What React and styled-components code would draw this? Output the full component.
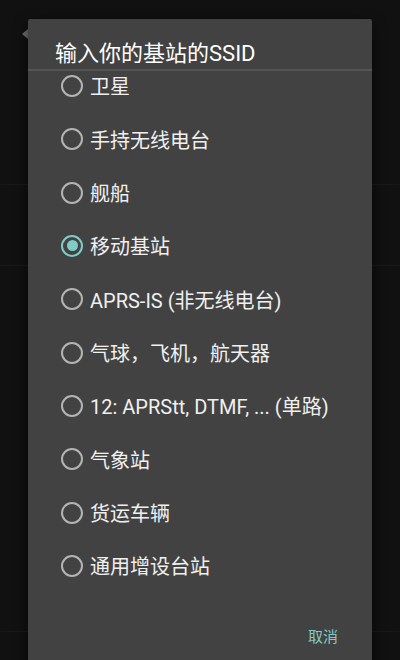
import React, { useState } from "react";
import styled, { createGlobalStyle } from "styled-components";

const GlobalStyle = createGlobalStyle`
    html, body {
        margin: 0;
        padding: 0;
        background: #111111;
    }
    * {
        box-sizing: border-box;
    }
`;

const Screen = styled.div`
    position: relative;
    width: 400px;
    height: 660px;
    overflow: hidden;
    background: #111111;
    font-family: Roboto, "Noto Sans CJK SC", sans-serif;
    padding: 19px 0 0 28px;
`;

const BackChevron = styled.div`
    position: absolute;
    left: 22px;
    top: 29px;
    width: 0;
    height: 0;
    border-top: 5px solid transparent;
    border-bottom: 5px solid transparent;
    border-right: 6px solid #6f6f6f;
`;

const BgLine = styled.div`
    position: absolute;
    left: 0;
    right: 0;
    top: ${({ y }) => y}px;
    height: 1px;
    background: #181818;
`;

const Dialog = styled.div`
    position: relative;
    width: 344px;
    min-height: 660px;
    background: #424242;
    border-radius: 2px;
    box-shadow: 0 4px 14px rgba(0, 0, 0, 0.6);
    display: flex;
    flex-direction: column;
`;

const Title = styled.div`
    height: 50px;
    padding: 21px 27px 0;
    font-size: 22px;
    line-height: 28px;
    color: #ffffff;
    white-space: nowrap;
`;

const Divider = styled.div`
    height: 2px;
    background: #545454;
`;

const ListViewport = styled.div`
    overflow: hidden;
`;

const List = styled.div`
    margin-top: -11.7px;
    display: flex;
    flex-direction: column;
`;

const Item = styled.label`
    height: 53.33px;
    display: flex;
    align-items: center;
    gap: 7px;
    padding-left: 33px;
    cursor: pointer;
`;

const Radio = styled.span`
    width: 22px;
    height: 22px;
    border-radius: 50%;
    border: 2px solid ${({ checked }) => (checked ? "#80cbc4" : "#b4b4b4")};
    display: flex;
    align-items: center;
    justify-content: center;
    flex-shrink: 0;

    &::after {
        content: "";
        width: 11px;
        height: 11px;
        border-radius: 50%;
        background: #80cbc4;
        display: ${({ checked }) => (checked ? "block" : "none")};
    }
`;

const ItemText = styled.span`
    font-size: 20px;
    color: #f0f0f0;
    white-space: nowrap;
`;

const Footer = styled.div`
    display: flex;
    justify-content: flex-end;
    padding: 32px 26px 0 0;
`;

const TextButton = styled.button`
    background: none;
    border: none;
    padding: 0 8px;
    font-family: inherit;
    font-size: 15px;
    line-height: 24px;
    color: #80cbc4;
`;

const options = [
    "卫星",
    "手持无线电台",
    "舰船",
    "移动基站",
    "APRS-IS (非无线电台)",
    "气球，飞机，航天器",
    "12: APRStt, DTMF, ... (单路)",
    "气象站",
    "货运车辆",
    "通用增设台站",
];

export default function App() {
    const [selected, setSelected] = useState(3);

    return (
        <Screen>
            <GlobalStyle />
            <BgLine y={184} />
            <BgLine y={265} />
            <BgLine y={631} />
            <BackChevron />
            <Dialog>
                <Title>输入你的基站的SSID</Title>
                <Divider />
                <ListViewport>
                    <List>
                        {options.map((text, i) => (
                            <Item key={i} onClick={() => setSelected(i)}>
                                <Radio checked={selected === i} />
                                <ItemText>{text}</ItemText>
                            </Item>
                        ))}
                    </List>
                </ListViewport>
                <Footer>
                    <TextButton>取消</TextButton>
                </Footer>
            </Dialog>
        </Screen>
    );
}
